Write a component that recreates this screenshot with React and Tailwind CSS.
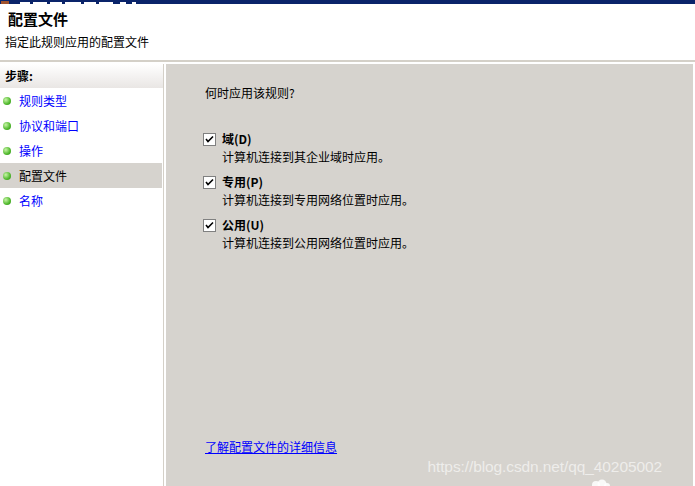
import React from "react";

const FONT = { fontFamily: '"Noto Sans CJK SC", "Liberation Sans", sans-serif' };

const steps = [
  { label: "规则类型" },
  { label: "协议和端口" },
  { label: "操作" },
  { label: "配置文件", active: true },
  { label: "名称" },
];

const profiles = [
  { name: "域(D)", desc: "计算机连接到其企业域时应用。" },
  { name: "专用(P)", desc: "计算机连接到专用网络位置时应用。" },
  { name: "公用(U)", desc: "计算机连接到公用网络位置时应用。" },
];

const Dot = () => (
  <span className="inline-block w-[8px] h-[8px] rounded-full bg-[radial-gradient(circle_at_35%_35%,#c8f5a8,#4fb82c_60%,#2f8a18)]" />
);

const Check = () => (
  <span className="w-[13px] h-[13px] border border-[#808080] bg-white flex items-center justify-center shrink-0">
    <svg width="9" height="9" viewBox="0 0 9 9">
      <path d="M1 4 L3 6.5 L8 1.5" stroke="#000" strokeWidth="1.6" fill="none" />
    </svg>
  </span>
);

export default function App() {
  return (
    <div className="w-[695px] h-[486px] bg-white flex flex-col overflow-hidden text-[12px] text-black" style={FONT}>
      {/* title bar, mostly cut off */}
      <div className="h-[4px] bg-[#0a246a] flex items-end gap-[3px] shrink-0">
        <span className="w-[8px] h-[3px] bg-[#a0522d] ml-[1px] mr-[8px]" />
        <span className="w-[10px] h-[2px] bg-white" />
        <span className="w-[14px] h-[2px] bg-white" />
        <span className="w-[12px] h-[2px] bg-white" />
        <span className="w-[16px] h-[2px] bg-white" />
        <span className="w-[12px] h-[2px] bg-white" />
        <span className="w-[14px] h-[2px] bg-white" />
        <span className="w-[6px] h-[2px] bg-white ml-[4px]" />
        <span className="w-[4px] h-[2px] bg-white ml-[3px]" />
      </div>

      {/* header */}
      <div className="h-[56px] shrink-0 px-[8px] pt-[4px]">
        <div className="text-[15px] font-bold leading-[22px]">配置文件</div>
        <div className="mt-[4px] leading-[16px] text-[12px] -ml-[3px]">指定此规则应用的配置文件</div>
      </div>
      <div className="h-[2px] bg-[#d4d0c8] shrink-0" />

      <div className="flex flex-1 min-h-0 pt-[2px]">
        {/* steps */}
        <div className="w-[164px] border-r border-[#d4d0c8] flex flex-col shrink-0">
          <div className="h-[24px] bg-gradient-to-b from-white to-[#e9e6e4] pl-[5px] flex items-center font-bold text-[12px]">步骤:</div>
          <div>
            {steps.map((s) => (
              <div
                key={s.label}
                className={`h-[25px] flex items-center gap-[8px] pl-[3px] mr-[1px] ${s.active ? "bg-[#d6d3ce] text-black" : "text-[#0000ff]"}`}
              >
                <Dot />
                <span>{s.label}</span>
              </div>
            ))}
          </div>
        </div>

        {/* content */}
        <div className="flex-1 ml-[2px] mr-[2px] bg-[#d6d3ce] relative pl-[39px] pt-[21px] flex flex-col">
          <div className="leading-[16px]">何时应用该规则?</div>
          <div className="mt-[29px] flex flex-col gap-[7px]">
            {profiles.map((p) => (
              <div key={p.name} className="flex gap-[6px] -ml-[2px]">
                <div className="pt-[3px]">
                  <Check />
                </div>
                <div className="flex flex-col leading-[18px]">
                  <span className="font-bold">{p.name}</span>
                  <span>{p.desc}</span>
                </div>
              </div>
            ))}
          </div>
          <div className="mt-auto mb-[30px]">
            <a className="text-[#0000ff] underline leading-[16px]">了解配置文件的详细信息</a>
          </div>

          <span
            className="absolute right-[31px] bottom-[8px] text-[15.5px] text-white/60 tracking-[-0.1px]"
            style={{ fontFamily: '"Liberation Sans", Arial, sans-serif' }}
          >
            https://blog.csdn.net/qq_40205002
          </span>
          <svg className="absolute left-[425px] bottom-0" width="20" height="10" viewBox="0 0 20 10">
            <circle cx="5" cy="9" r="4" fill="#fff" opacity="0.85" />
            <circle cx="11" cy="8" r="4.5" fill="#fff" opacity="0.85" />
            <circle cx="16" cy="10" r="3" fill="#fff" opacity="0.85" />
          </svg>
        </div>
      </div>
    </div>
  );
}
